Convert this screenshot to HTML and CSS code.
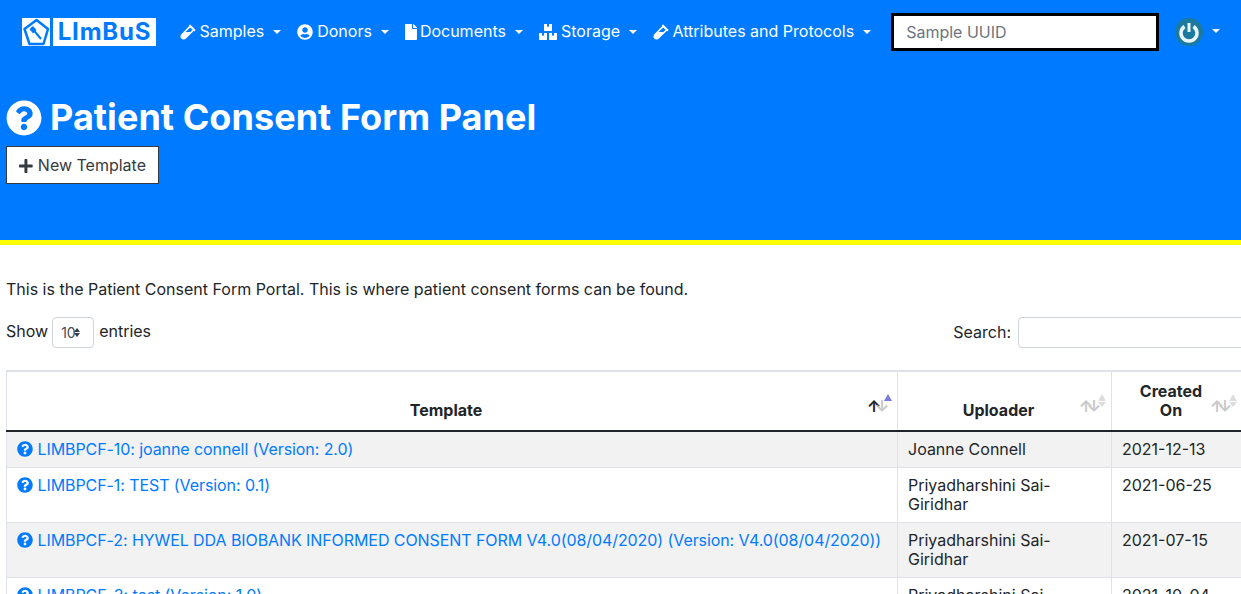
FILE: index.html
```html
<!DOCTYPE html>
<html lang="en">

<head>
    <meta charset="UTF-8">
    <meta name="viewport" content="width=device-width, initial-scale=1.0">
    <title>Patient Consent Form Panel</title>
    <link rel="stylesheet" href="styles.css">
</head>

<body>
    <svg class="defs" aria-hidden="true">
        <symbol id="i-vial" viewBox="0 0 480 512"><path d="M477.7 186.1L309.5 18.3c-3.1-3.1-8.2-3.1-11.3 0l-34 33.9c-3.1 3.1-3.1 8.2 0 11.3l11.2 11.1L33 316.5c-38.8 38.7-45.1 102-9.4 143.5 20.6 24 49.5 36 78.4 35.9 26.4 0 52.8-10 72.9-30.1l246.3-245.7 11.2 11.1c3.1 3.1 8.2 3.1 11.3 0l34-33.9c3.1-3 3.1-8.1 0-11.2zM318 256H161l148-147.7 78.5 78.3L318 256z"/></symbol>
        <symbol id="i-user" viewBox="0 0 496 512"><path d="M248 8C111 8 0 119 0 256s111 248 248 248 248-111 248-248S385 8 248 8zm0 96c48.6 0 88 39.4 88 88s-39.4 88-88 88-88-39.4-88-88 39.4-88 88-88zm0 344c-58.7 0-111.3-26.6-146.5-68.2 18.8-35.4 55.6-59.8 98.5-59.8 2.4 0 4.8.4 7.1 1.1 13 4.2 26.6 6.9 40.9 6.9 14.3 0 28-2.7 40.9-6.9 2.3-.7 4.7-1.1 7.1-1.1 42.9 0 79.7 24.4 98.5 59.8C359.3 421.4 306.7 448 248 448z"/></symbol>
        <symbol id="i-file" viewBox="0 0 384 512"><path d="M224 136V0H24C10.7 0 0 10.7 0 24v464c0 13.3 10.7 24 24 24h336c13.3 0 24-10.7 24-24V160H248c-13.2 0-24-10.8-24-24zm160-14.1v6.1H256V0h6.1c6.4 0 12.5 2.5 17 7l97.9 98c4.5 4.5 7 10.6 7 16.9z"/></symbol>
        <symbol id="i-boxes" viewBox="0 0 576 512"><path d="M560 288h-80v96l-32-21.3-32 21.3v-96h-80c-8.8 0-16 7.2-16 16v192c0 8.8 7.2 16 16 16h224c8.8 0 16-7.2 16-16V304c0-8.8-7.2-16-16-16zm-384-64h224c8.8 0 16-7.2 16-16V16c0-8.8-7.2-16-16-16h-80v96l-32-21.3L256 96V0h-80c-8.8 0-16 7.2-16 16v192c0 8.8 7.2 16 16 16zm64 64h-80v96l-32-21.3L96 384v-96H16c-8.8 0-16 7.2-16 16v192c0 8.8 7.2 16 16 16h224c8.8 0 16-7.2 16-16V304c0-8.8-7.2-16-16-16z"/></symbol>
        <symbol id="i-question" viewBox="0 0 512 512"><path d="M504 256c0 136.997-111.043 248-248 248S8 392.997 8 256C8 119.083 119.043 8 256 8s248 111.083 248 248zM262.655 90c-54.497 0-89.255 22.957-116.549 63.758-3.536 5.286-2.353 12.415 2.715 16.258l34.699 26.31c5.205 3.947 12.621 3.008 16.665-2.122 17.864-22.658 30.113-35.797 57.303-35.797 20.429 0 45.698 13.148 45.698 32.958 0 14.976-12.363 22.667-32.534 33.976C247.128 238.528 216 254.941 216 296v4c0 6.627 5.373 12 12 12h56c6.627 0 12-5.373 12-12v-1.333c0-28.462 83.186-29.647 83.186-106.667 0-58.002-60.165-102-116.531-102zM256 338c-25.365 0-46 20.635-46 46 0 25.364 20.635 46 46 46s46-20.636 46-46c0-25.365-20.635-46-46-46z"/></symbol>
        <symbol id="i-plus" viewBox="0 0 448 512"><path d="M416 208H272V64c0-17.67-14.33-32-32-32h-32c-17.67 0-32 14.33-32 32v144H32c-17.67 0-32 14.33-32 32v32c0 17.67 14.33 32 32 32h144v144c0 17.67 14.33 32 32 32h32c17.67 0 32-14.33 32-32V304h144c17.67 0 32-14.33 32-32v-32c0-17.67-14.33-32-32-32z"/></symbol>
    </svg>

    <div class="top">
        <nav class="navbar">
            <a class="brand" href="#">
                <span class="brand-mark">
                    <svg viewBox="0 0 28 28" width="28" height="28">
                        <path d="M14.5 2 26 11 21.500 26H7.500L2.500 11Z" fill="none" stroke="#007bff" stroke-width="2.500" stroke-linejoin="round"/>
                        <path d="M7.500 11 11 8 14.500 12 11 15.500Z" fill="#007bff"/>
                        <path d="M11.500 12 19 21" stroke="#007bff" stroke-width="2"/>
                    </svg>
                </span>
                <span class="brand-name">LImBuS</span>
            </a>
            <a class="nav-link" href="#"><svg class="icon icon-vial"><use href="#i-vial"/></svg>Samples<span class="caret"></span></a>
            <a class="nav-link" href="#"><svg class="icon"><use href="#i-user"/></svg>Donors<span class="caret"></span></a>
            <a class="nav-link" href="#"><svg class="icon icon-file"><use href="#i-file"/></svg>Documents<span class="caret"></span></a>
            <a class="nav-link" href="#"><svg class="icon icon-boxes"><use href="#i-boxes"/></svg>Storage<span class="caret"></span></a>
            <a class="nav-link" href="#"><svg class="icon icon-vial"><use href="#i-vial"/></svg>Attributes and Protocols<span class="caret"></span></a>
            <input class="uuid" type="text" placeholder="Sample UUID">
            <a class="user" href="#">
                <svg class="avatar" viewBox="0 0 28 28" width="28" height="28">
                    <circle cx="14" cy="14" r="14" fill="#1b7a9e"/>
                    <path d="M9.500 8.500A8 8 0 1 0 18.500 8.500" fill="none" stroke="#e8f6fb" stroke-width="3.500"/>
                    <path d="M14 5V14" stroke="#e8f6fb" stroke-width="3"/>
                </svg>
                <span class="caret"></span>
            </a>
        </nav>

        <header class="jumbotron">
            <h1><svg class="h1-icon"><use href="#i-question"/></svg>Patient Consent Form Panel</h1>
            <button class="btn-new" type="button"><svg class="plus"><use href="#i-plus"/></svg>New Template</button>
        </header>
    </div>

    <main class="content">
        <p class="intro">This is the Patient Consent Form Portal. This is where patient consent forms can be found.</p>

        <div class="controls">
            <label class="length">Show <span class="select">10<span class="select-arrows"></span></span> entries</label>
            <label class="search">Search: <input type="text"></label>
        </div>

        <table class="records">
            <colgroup>
                <col class="col-template">
                <col class="col-uploader">
                <col class="col-created">
            </colgroup>
            <thead>
                <tr>
                    <th class="sorted">Template<span class="sort"><b class="up">↑</b><b>↓</b></span><span class="tri tri-active"></span></th>
                    <th>Uploader<span class="sort"><b>↑</b><b>↓</b></span><span class="tri"></span><span class="tri tri-down"></span></th>
                    <th>Created<br>On<span class="sort"><b>↑</b><b>↓</b></span><span class="tri"></span><span class="tri tri-down"></span></th>
                </tr>
            </thead>
            <tbody>
                <tr class="odd">
                    <td><a href="#"><svg class="q"><use href="#i-question"/></svg>LIMBPCF-10: joanne connell (Version: 2.0)</a></td>
                    <td>Joanne Connell</td>
                    <td>2021-12-13</td>
                </tr>
                <tr>
                    <td><a href="#"><svg class="q"><use href="#i-question"/></svg>LIMBPCF-1: TEST (Version: 0.1)</a></td>
                    <td>Priyadharshini Sai-Giridhar</td>
                    <td>2021-06-25</td>
                </tr>
                <tr class="odd">
                    <td><a href="#"><svg class="q"><use href="#i-question"/></svg>LIMBPCF-2: HYWEL DDA BIOBANK INFORMED CONSENT FORM V4.0(08/04/2020) (Version: V4.0(08/04/2020))</a></td>
                    <td>Priyadharshini Sai-Giridhar</td>
                    <td>2021-07-15</td>
                </tr>
                <tr>
                    <td><a href="#"><svg class="q"><use href="#i-question"/></svg>LIMBPCF-3: test (Version: 1.0)</a></td>
                    <td>Priyadharshini Sai-Giridhar</td>
                    <td>2021-10-04</td>
                </tr>
            </tbody>
        </table>
    </main>
</body>

</html>
```

FILE: styles.css
```css
html, body {
    height: 594px;
    overflow: hidden;
}

body {
    margin: 0;
    font-family: Inter, "Liberation Sans", sans-serif;
    font-size: 16px;
    line-height: 1.2;
    color: #212529;
    background-color: #fff;
}

a {
    color: #007bff;
    text-decoration: none;
}

.defs {
    display: none;
}

.top {
    height: 240px;
    background-color: #007bff;
    border-bottom: 5px solid #ff0;
}

/* navbar */
.navbar {
    display: flex;
    align-items: center;
    height: 64px;
    padding-left: 22px;
}

.brand {
    display: flex;
    gap: 3px;
    margin-right: 16px;
}

.brand-mark {
    display: block;
    width: 28px;
    height: 28px;
    background-color: #fff;
}

.brand-mark svg {
    display: block;
}

.brand-name {
    width: 103px;
    height: 28px;
    background-color: #fff;
    font-size: 24px;
    font-weight: 700;
    line-height: 28px;
    letter-spacing: 0.8px;
    text-align: center;
    white-space: nowrap;
}

.nav-link {
    display: flex;
    align-items: center;
    padding: 0 8px;
    color: #fff;
    white-space: nowrap;
}

.icon {
    width: 16px;
    height: 16px;
    margin-right: 4px;
    fill: #fff;
}

.icon-vial {
    margin-right: 3.5px;
}

.icon-file {
    width: 12px;
    margin-right: 3px;
}

.icon-boxes {
    width: 18px;
    margin-right: 4px;
}

.caret {
    width: 0;
    height: 0;
    margin-left: 9px;
    border-top: 4.8px solid #fff;
    border-left: 4.8px solid transparent;
    border-right: 4.8px solid transparent;
}

.uuid {
    box-sizing: border-box;
    width: 268px;
    height: 38px;
    margin-left: 12px;
    padding: 6px 12px;
    border: 3px solid #000;
    background-color: #fff;
    font: inherit;
    outline: none;
}

.uuid::placeholder {
    color: #6c757d;
}

.user {
    display: flex;
    align-items: center;
    margin-left: 16px;
}

.user .caret {
    margin-left: 9px;
    margin-bottom: 3px;
}

/* jumbotron */
.jumbotron {
    padding: 30px 6px 0;
}

.jumbotron h1 {
    display: flex;
    align-items: center;
    margin: 0 0 5px;
    color: #fff;
    font-size: 36px;
    font-weight: 700;
    line-height: 47px;
    letter-spacing: 0.05px;
}

.h1-icon {
    width: 36px;
    height: 36px;
    margin-right: 8px;
    fill: #fff;
}

.btn-new {
    display: flex;
    align-items: center;
    box-sizing: border-box;
    width: 153px;
    height: 38px;
    padding: 1px 12px 0;
    border: 1px solid #343a40;
    background-color: #fff;
    color: #343a40;
    font: inherit;
    white-space: nowrap;
}

.plus {
    width: 14px;
    height: 16px;
    margin-right: 5px;
    fill: #343a40;
}

/* content */
.content {
    padding: 35px 0 0 6px;
}

.intro {
    margin: 0 0 18px;
    line-height: 19px;
}

.controls {
    display: flex;
    justify-content: space-between;
    align-items: flex-start;
    height: 53px;
    white-space: nowrap;
}

.length {
    display: flex;
    align-items: flex-start;
    gap: 4px;
    height: 31px;
    line-height: 28px;
}

.select {
    position: relative;
    box-sizing: border-box;
    display: block;
    width: 42px;
    height: 31px;
    margin-right: 1px;
    padding-left: 8px;
    border: 1px solid #ced4da;
    border-radius: 4px;
    font-size: 14px;
    line-height: 29px;
    color: #495057;
}

.select-arrows {
    position: absolute;
    top: 10px;
    left: 21px;
    width: 0;
    height: 0;
    border-bottom: 4px solid #343a40;
    border-left: 3px solid transparent;
    border-right: 3px solid transparent;
}

.select-arrows::after {
    content: "";
    position: absolute;
    top: 5px;
    left: -3px;
    border-top: 4px solid #343a40;
    border-left: 3px solid transparent;
    border-right: 3px solid transparent;
}

.search {
    display: flex;
    align-items: center;
    gap: 7px;
    height: 31px;
}

.search input {
    box-sizing: border-box;
    width: 240px;
    height: 31px;
    margin-right: -17px;
    border: 1px solid #ced4da;
    border-radius: 4px;
}

.records {
    table-layout: fixed;
    width: 1237px;
    border-collapse: collapse;
    border: 1px solid #dee2e6;
    border-top-width: 2px;
}

.col-template {
    width: 891px;
}

.col-uploader {
    width: 214px;
}

.records th,
.records td {
    border: 1px solid #dee2e6;
    padding: 8px 10px;
    line-height: 19px;
    vertical-align: top;
    text-align: left;
}

.records th {
    position: relative;
    padding: 10px 22px 10px 10px;
    border-bottom: 2px solid #212529;
    vertical-align: bottom;
    text-align: center;
    font-weight: 700;
}

.records td a {
    letter-spacing: -0.08px;
}

.odd {
    background-color: #f2f2f2;
}

.q {
    width: 16px;
    height: 16px;
    margin-right: 4.5px;
    vertical-align: -2px;
    fill: #007bff;
}

/* sort indicators */
.sort {
    position: absolute;
    right: 13px;
    top: 25px;
    display: flex;
    font-size: 16px;
    line-height: 19px;
    color: #c8c8c8;
}

.sorted .sort {
    right: 11px;
}

.sort b {
    display: flex;
    justify-content: center;
    width: 8px;
    font-weight: 700;
}

.sort .up {
    color: #212529;
}

.tri {
    position: absolute;
    right: 5px;
    top: 22px;
    width: 0;
    height: 0;
    border-bottom: 7px solid #ddd;
    border-left: 4.5px solid transparent;
    border-right: 4.5px solid transparent;
}

.tri-active {
    border-bottom-color: #7b7bdc;
}

.tri-down {
    top: 30px;
    border-top: 5px solid #ddd;
    border-bottom: 0;
}
```
